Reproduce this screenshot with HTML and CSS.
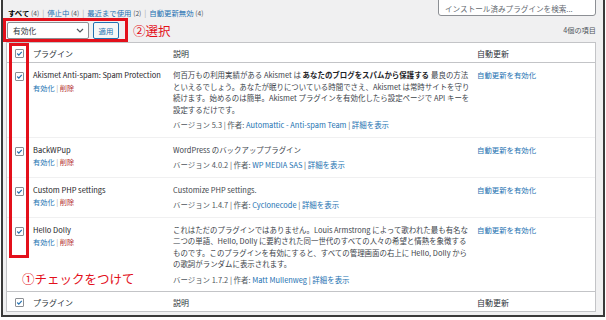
FILE: index.html
```html
<!DOCTYPE html>
<html lang="ja">
<head>
    <meta charset="UTF-8">
    <meta name="viewport" content="width=device-width, initial-scale=1.0">
    <title>プラグイン</title>
    <link rel="stylesheet" href="styles.css">
</head>
<body>

<div class="frame">
    <!-- Filter links and search -->
    <div class="top-bar">
        <ul class="views">
            <li class="current">すべて <span class="count">(4)</span></li>
            <li class="sep">|</li>
            <li><a href="#">停止中</a> <span class="count">(4)</span></li>
            <li class="sep">|</li>
            <li><a href="#">最近まで使用</a> <span class="count">(2)</span></li>
            <li class="sep">|</li>
            <li><a href="#">自動更新無効</a> <span class="count">(4)</span></li>
        </ul>
        <div class="search">インストール済みプラグインを検索...</div>
    </div>

    <!-- Bulk actions -->
    <div class="tablenav">
        <div class="bulk">
            <div class="select">
                <span>有効化</span>
                <svg width="8" height="5" viewBox="0 0 8 5"><polyline points="1,1 4,4 7,1" fill="none" stroke="#50575e" stroke-width="1.2"/></svg>
            </div>
            <button class="apply">適用</button>
        </div>
        <span class="note">②選択</span>
        <span class="items">4個の項目</span>
    </div>

    <!-- Plugin list -->
    <div class="plugins">
        <div class="row head">
            <div class="cell cb"><span class="check"><svg viewBox="0 0 9 9"><polyline points="1.6,4.5 3.6,6.5 7.4,2.3"/></svg></span></div>
            <div class="cell">プラグイン</div>
            <div class="cell">説明</div>
            <div class="cell">自動更新</div>
        </div>

        <div class="row">
            <div class="cell cb"><span class="check"><svg viewBox="0 0 9 9"><polyline points="1.6,4.5 3.6,6.5 7.4,2.3"/></svg></span></div>
            <div class="cell name">
                <strong>Akismet Anti-spam: Spam Protection</strong>
                <div class="actions"><a href="#">有効化</a> <span class="sep">|</span> <a href="#" class="delete">削除</a></div>
            </div>
            <div class="cell desc">
                <p>何百万もの利用実績がある Akismet は <b>あなたのブログをスパムから保護する</b>最良の方法<br>といえるでしょう。あなたが眠りについている時間でさえ、Akismet は常時サイトを守り<br>続けます。始めるのは簡単。Akismet プラグインを有効化したら設定ページで API キーを<br>設定するだけです。</p>
                <p class="version">バージョン 5.3 | 作者: <a href="#">Automattic - Anti-spam Team</a> | <a href="#">詳細を表示</a></p>
            </div>
            <div class="cell auto"><a href="#">自動更新を有効化</a></div>
        </div>

        <div class="row">
            <div class="cell cb"><span class="check"><svg viewBox="0 0 9 9"><polyline points="1.6,4.5 3.6,6.5 7.4,2.3"/></svg></span></div>
            <div class="cell name">
                <strong>BackWPup</strong>
                <div class="actions"><a href="#">有効化</a> <span class="sep">|</span> <a href="#" class="delete">削除</a></div>
            </div>
            <div class="cell desc">
                <p>WordPress のバックアッププラグイン</p>
                <p class="version">バージョン 4.0.2 | 作者: <a href="#">WP MEDIA SAS</a> | <a href="#">詳細を表示</a></p>
            </div>
            <div class="cell auto"><a href="#">自動更新を有効化</a></div>
        </div>

        <div class="row">
            <div class="cell cb"><span class="check"><svg viewBox="0 0 9 9"><polyline points="1.6,4.5 3.6,6.5 7.4,2.3"/></svg></span></div>
            <div class="cell name">
                <strong>Custom PHP settings</strong>
                <div class="actions"><a href="#">有効化</a> <span class="sep">|</span> <a href="#" class="delete">削除</a></div>
            </div>
            <div class="cell desc">
                <p>Customize PHP settings.</p>
                <p class="version">バージョン 1.4.7 | 作者: <a href="#">Cyclonecode</a> | <a href="#">詳細を表示</a></p>
            </div>
            <div class="cell auto"><a href="#">自動更新を有効化</a></div>
        </div>

        <div class="row">
            <div class="cell cb"><span class="check"><svg viewBox="0 0 9 9"><polyline points="1.6,4.5 3.6,6.5 7.4,2.3"/></svg></span></div>
            <div class="cell name">
                <strong>Hello Dolly</strong>
                <div class="actions"><a href="#">有効化</a> <span class="sep">|</span> <a href="#" class="delete">削除</a></div>
            </div>
            <div class="cell desc">
                <p>これはただのプラグインではありません。Louis Armstrong によって歌われた最も有名な<br>二つの単語、Hello, Dolly に要約された同一世代のすべての人々の希望と情熱を象徴する<br>ものです。このプラグインを有効にすると、すべての管理画面の右上に Hello, Dolly から<br>の歌詞がランダムに表示されます。</p>
                <p class="version">バージョン 1.7.2 | 作者: <a href="#">Matt Mullenweg</a> | <a href="#">詳細を表示</a></p>
            </div>
            <div class="cell auto"><a href="#">自動更新を有効化</a></div>
        </div>

        <div class="row foot">
            <div class="cell cb"><span class="check"><svg viewBox="0 0 9 9"><polyline points="1.6,4.5 3.6,6.5 7.4,2.3"/></svg></span></div>
            <div class="cell">プラグイン</div>
            <div class="cell">説明</div>
            <div class="cell">自動更新</div>
        </div>

        <!-- Annotations -->
        <div class="mark-cb"></div>
        <div class="note note-check">①チェックをつけて</div>
    </div>
</div>

</body>
</html>
```

FILE: styles.css
```css
body {
    margin: 0;
    background-color: #fff;
    font-family: "Noto Sans CJK JP", "Noto Sans", sans-serif;
    font-size: 7.4px;
    color: #3c434a;
}
a {
    color: #2271b1;
    text-decoration: none;
}
.frame {
    box-sizing: border-box;
    width: 604px;
    height: 317px;
    margin-left: 1px;
    padding: 0 7px 0 3px;
    background-color: #f0f0f1;
    border: 2px solid #3a3a3a;
    border-top: none;
    overflow: hidden;
}

/* top bar */
.top-bar {
    display: flex;
    justify-content: space-between;
    align-items: flex-start;
    height: 18px;
}
.views {
    display: flex;
    gap: 3px;
    margin: 0;
    padding: 8px 0 0 2px;
    list-style: none;
    line-height: 10px;
    font-size: 7.4px;
}
.views .current {
    font-weight: bold;
    color: #000;
}
.views .count {
    font-weight: normal;
    color: #50575e;
    font-size: 6.6px;
}
.views .sep {
    color: #a7aaad;
}
.search {
    box-sizing: border-box;
    width: 158px;
    height: 22px;
    margin-top: -6px;
    padding: 8px 0 0 6px;
    background: #fff;
    border: 1px solid #8c8f94;
    border-radius: 3px;
    color: #646970;
    font-size: 7.6px;
    line-height: 12px;
}

/* bulk actions */
.tablenav {
    display: flex;
    align-items: center;
    height: 24px;
}
.bulk {
    box-sizing: border-box;
    display: flex;
    gap: 4px;
    width: 125px;
    height: 24px;
    margin-left: -3px;
    padding: 1px 0 0 1px;
    border: 3px solid #e3101b;
}
.select {
    box-sizing: border-box;
    display: flex;
    justify-content: space-between;
    align-items: center;
    width: 82px;
    height: 17px;
    padding: 0 4px 0 5px;
    background: #fff;
    border: 1px solid #8c8f94;
    border-radius: 2px;
    color: #2c3338;
    font-size: 7.7px;
}
.apply {
    box-sizing: border-box;
    width: 26px;
    height: 17px;
    padding: 0;
    background: #f6f7f7;
    border: 1px solid #2271b1;
    border-radius: 2px;
    color: #2271b1;
    font-family: inherit;
    font-size: 7.4px;
}
.note {
    color: #e3101b;
    font-size: 12.5px;
    line-height: 14px;
}
.tablenav .note {
    margin-left: 5px;
    margin-top: 1px;
}
.items {
    margin-left: auto;
    color: #50575e;
    font-size: 7.2px;
}

/* plugin list */
.plugins {
    position: relative;
    background: #fff;
    border: 1px solid #c3c4c7;
}
.row {
    display: grid;
    grid-template-columns: 26px 140px 304px 1fr;
    border-bottom: 1px solid #f0f0f1;
}
.row .cell {
    padding: 6px 0 6px 0;
    line-height: 11.5px;
}
.row.head {
    border-bottom: 1px solid #c3c4c7;
}
.row.foot {
    border-top: 1px solid #c3c4c7;
    border-bottom: none;
    margin-top: -1px;
}
.row.head .cell,
.row.foot .cell {
    padding: 3px 0 0;
    height: 16px;
    line-height: 16px;
    color: #2c3338;
    font-size: 8px;
}
.row .cell.cb {
    padding-left: 8px;
}
.check {
    box-sizing: border-box;
    display: block;
    width: 9px;
    height: 9px;
    margin-top: 3px;
    background: #fff;
    border: 1px solid #8c8f94;
    border-radius: 1px;
}
.check svg {
    display: block;
    width: 7px;
    height: 7px;
    fill: none;
    stroke: #2271b1;
    stroke-width: 1.5;
}
.row.head .check,
.row.foot .check {
    margin-top: 3px;
}
.name strong {
    font-weight: normal;
    color: #1d2327;
    font-size: 7.5px;
}
.actions {
    margin-top: 2px;
    font-size: 7.2px;
}
.actions .sep {
    color: #a7aaad;
}
.actions .delete {
    color: #b32d2e;
}
.desc {
    font-size: 7.45px;
    white-space: nowrap;
}
.desc p {
    margin: 0;
}
.desc b {
    color: #1d2327;
    margin-right: 2px;
}
.desc .version {
    margin-top: 4px;
    color: #50575e;
}

/* annotations */
.mark-cb {
    position: absolute;
    left: 2px;
    top: 0;
    width: 20px;
    height: 215px;
    box-sizing: border-box;
    border: 3px solid #e3101b;
}
.note-check {
    position: absolute;
    left: 15px;
    top: 229px;
}
```
